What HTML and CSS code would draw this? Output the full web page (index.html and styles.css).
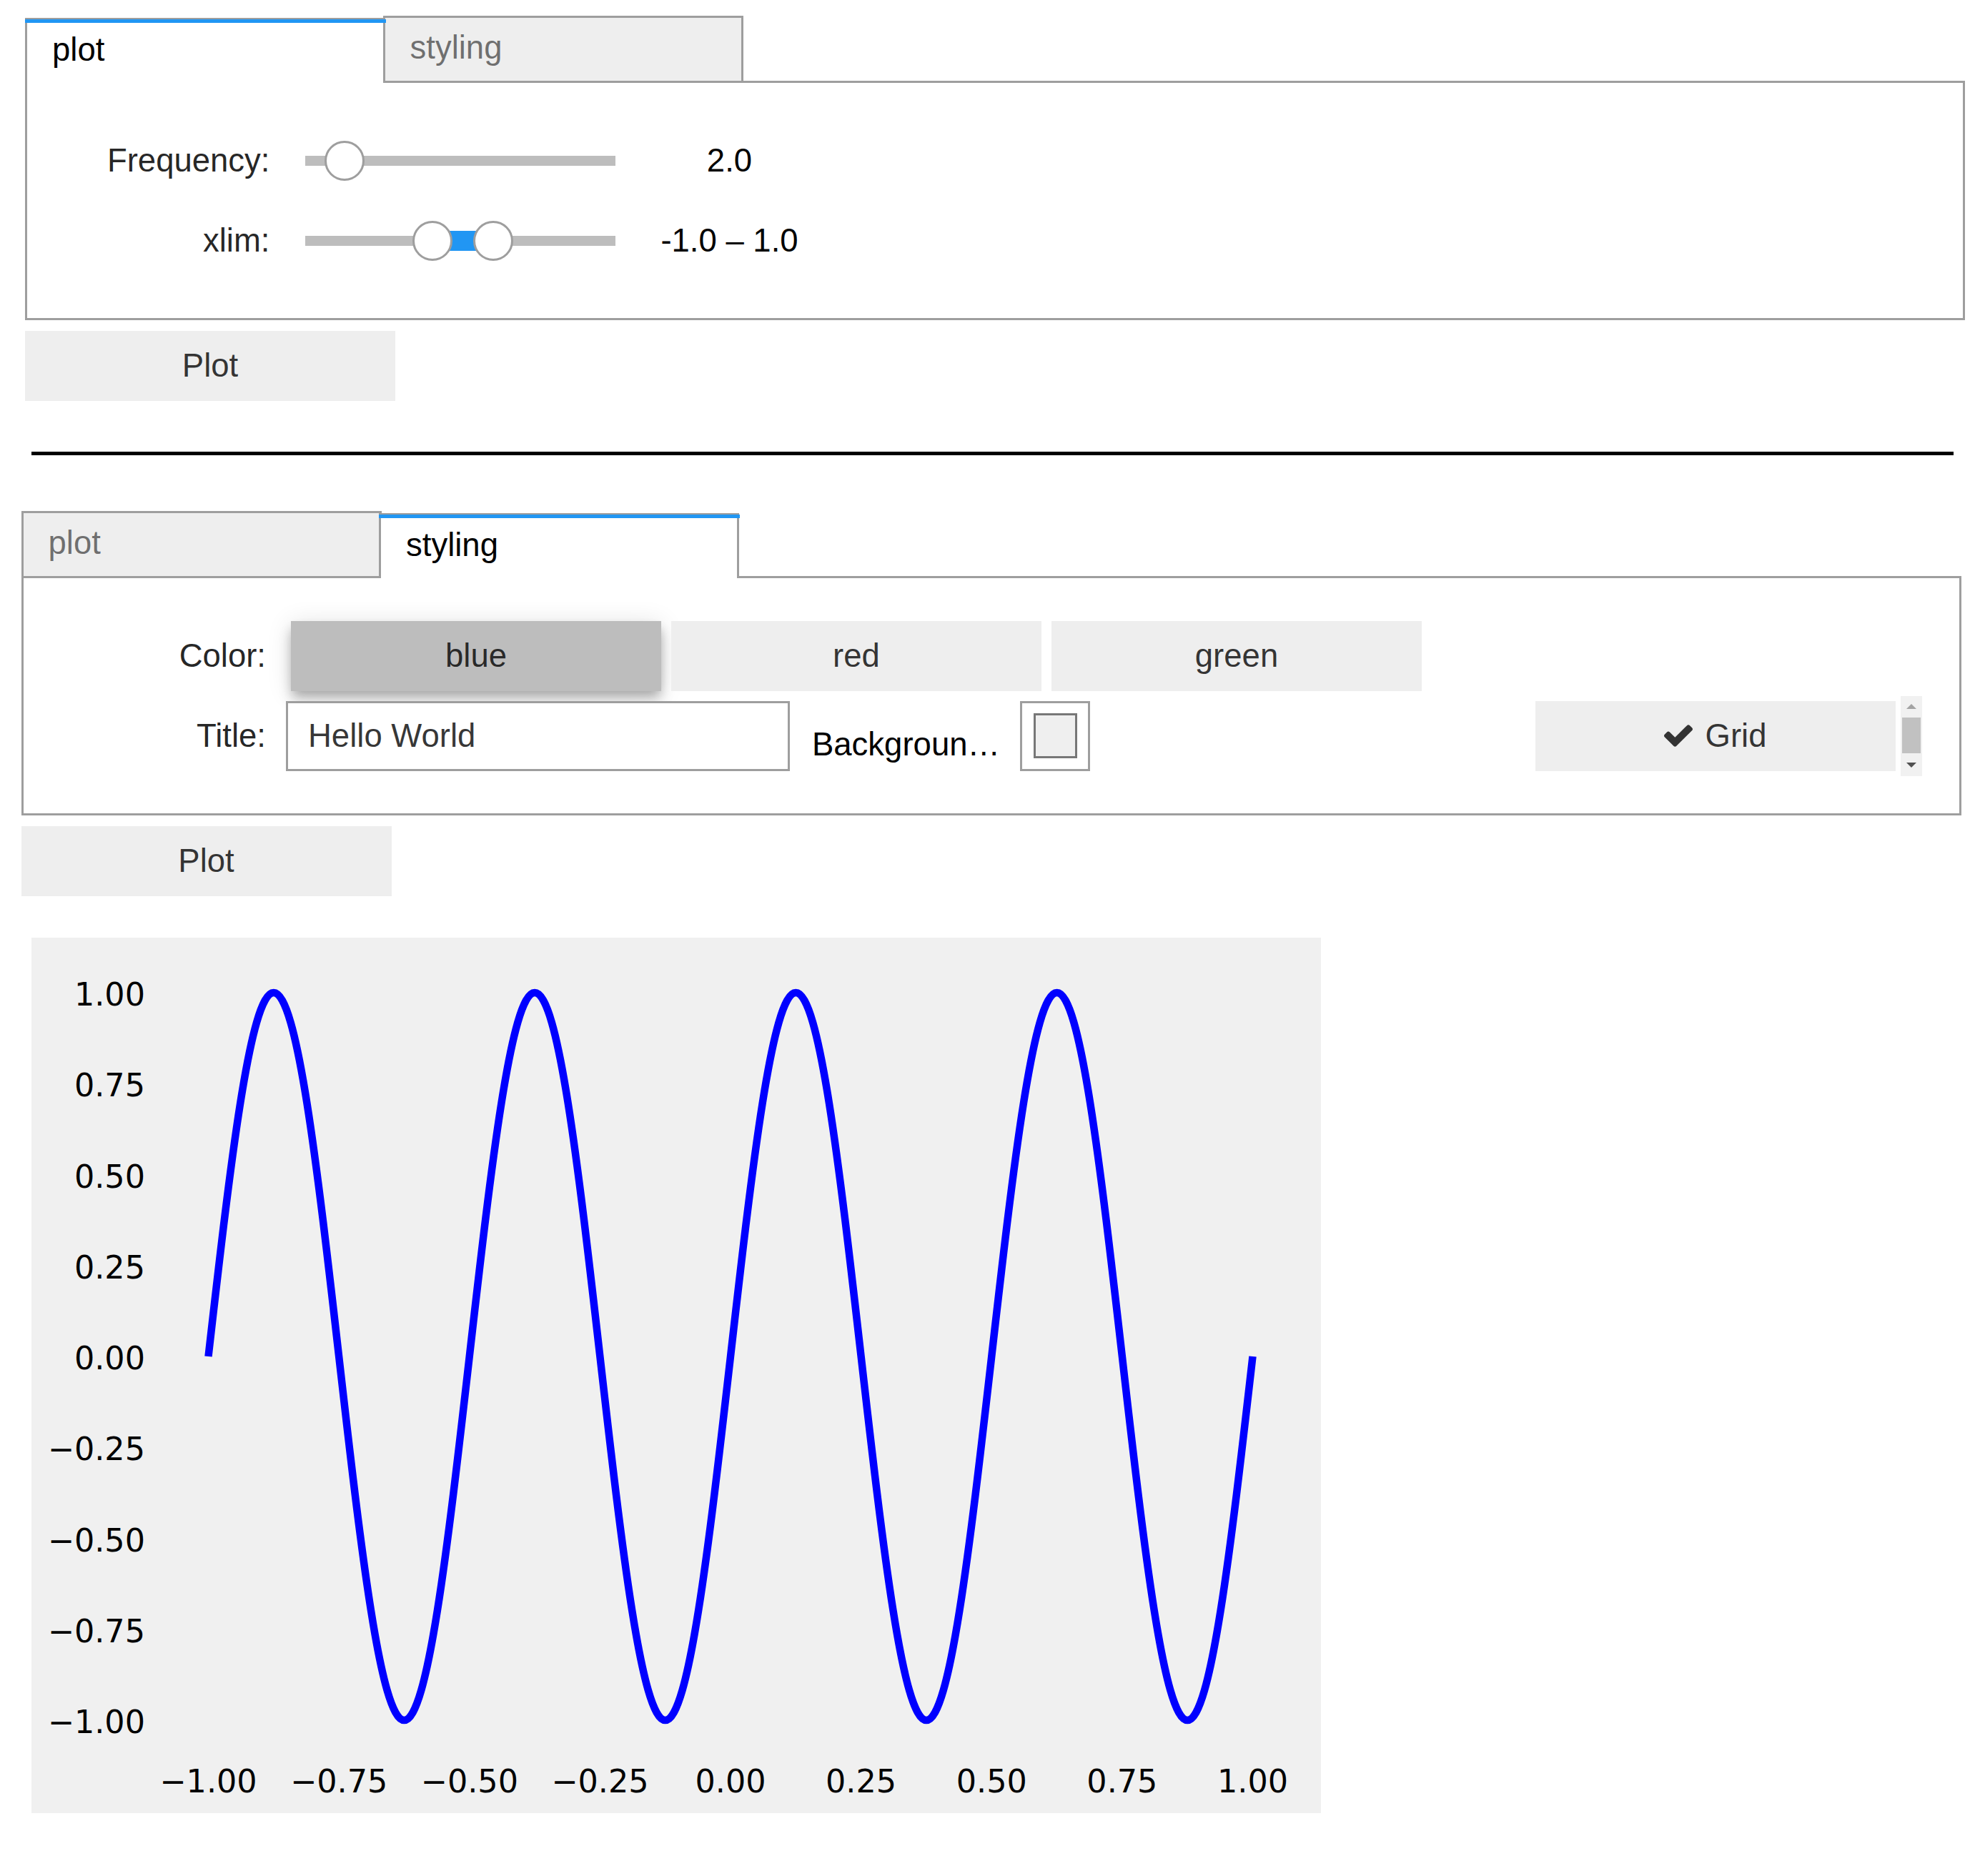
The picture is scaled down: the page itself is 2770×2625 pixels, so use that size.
FILE: index.html
```html
<!DOCTYPE html>
<html>
<head>
<meta charset="utf-8">
<title>Widgets</title>
<link rel="stylesheet" href="styles.css">
</head>
<body>
<div class="page">

  <div class="tab-widget first">
    <div class="tab-bar">
      <div class="tab current">plot</div>
      <div class="tab">styling</div>
    </div>
    <div class="tab-panel">
      <div class="wrow">
        <div class="wlabel">Frequency:</div>
        <div class="slider">
          <div class="track"></div>
          <div class="handle" style="left:27px"></div>
        </div>
        <div class="readout">2.0</div>
      </div>
      <div class="wrow">
        <div class="wlabel">xlim:</div>
        <div class="slider">
          <div class="track"></div>
          <div class="range" style="left:178px;width:85px"></div>
          <div class="handle" style="left:150px"></div>
          <div class="handle" style="left:235px"></div>
        </div>
        <div class="readout">-1.0 – 1.0</div>
      </div>
    </div>
  </div>
  <button class="wbutton first-btn">Plot</button>

  <hr class="divider">

  <div class="tab-widget second">
    <div class="tab-bar">
      <div class="tab">plot</div>
      <div class="tab current">styling</div>
    </div>
    <div class="tab-panel">
      <div class="wrow">
        <div class="wlabel">Color:</div>
        <div class="toggles">
          <button class="toggle selected">blue</button>
          <button class="toggle">red</button>
          <button class="toggle">green</button>
        </div>
      </div>
      <div class="hbox">
        <div class="text-widget">
          <div class="wlabel">Title:</div>
          <input class="text-input" type="text" value="Hello World">
        </div>
        <div class="color-widget">
          <div class="wlabel bg-label">Backgroun…</div>
          <div class="swatch"><div class="swatch-fill"></div></div>
        </div>
        <button class="grid-btn">
          <svg class="check" viewBox="121 334 1550 1188" width="40" height="31" aria-hidden="true"><path d="M1671 566q0 40-28 68l-724 724-136 136q-28 28-68 28t-68-28l-136-136-362-362q-28-28-28-68t28-68l136-136q28-28 68-28t68 28l294 295 656-657q28-28 68-28t68 28l136 136q28 28 28 68z"/></svg>
          <span>Grid</span>
        </button>
        <div class="vscroll">
          <div class="sb-btn"><span class="arrow-up"></span></div>
          <div class="sb-thumb"></div>
          <div class="sb-btn down"><span class="arrow-down"></span></div>
        </div>
      </div>
    </div>
  </div>
  <button class="wbutton second-btn">Plot</button>

  <div class="figure">
    <svg viewBox="0 0 1804 1225" width="1804" height="1225">
      <rect class="fig-bg" x="0" y="0" width="1804" height="1225"/>
      <g class="ytick">
        <text x="159" y="95">1.00</text>
        <text x="159" y="222.3">0.75</text>
        <text x="159" y="349.5">0.50</text>
        <text x="159" y="476.8">0.25</text>
        <text x="159" y="604">0.00</text>
        <text x="159" y="731.3">−0.25</text>
        <text x="159" y="858.5">−0.50</text>
        <text x="159" y="985.8">−0.75</text>
        <text x="159" y="1113">−1.00</text>
      </g>
      <g class="xtick">
        <text x="247.5" y="1195.5">−1.00</text>
        <text x="430.1" y="1195.5">−0.75</text>
        <text x="612.8" y="1195.5">−0.50</text>
        <text x="795.4" y="1195.5">−0.25</text>
        <text x="978" y="1195.5">0.00</text>
        <text x="1160.6" y="1195.5">0.25</text>
        <text x="1343.3" y="1195.5">0.50</text>
        <text x="1525.9" y="1195.5">0.75</text>
        <text x="1708.5" y="1195.5">1.00</text>
      </g>
      <path class="curve" d="M247.5 586
        c30.52,-267.3 58.36,-509 91.3125,-509 c32.95,0 60.79,241.7 91.3125,509 c30.52,267.3 58.36,509 91.3125,509 c32.95,0 60.79,-241.7 91.3125,-509
        c30.52,-267.3 58.36,-509 91.3125,-509 c32.95,0 60.79,241.7 91.3125,509 c30.52,267.3 58.36,509 91.3125,509 c32.95,0 60.79,-241.7 91.3125,-509
        c30.52,-267.3 58.36,-509 91.3125,-509 c32.95,0 60.79,241.7 91.3125,509 c30.52,267.3 58.36,509 91.3125,509 c32.95,0 60.79,-241.7 91.3125,-509
        c30.52,-267.3 58.36,-509 91.3125,-509 c32.95,0 60.79,241.7 91.3125,509 c30.52,267.3 58.36,509 91.3125,509 c32.95,0 60.79,-241.7 91.3125,-509"/>
    </svg>
  </div>

</div>
</body>
</html>
```

FILE: styles.css
```css
html, body {
  margin: 0;
  padding: 0;
  background: #ffffff;
}

body {
  font-family: "Liberation Sans", Arial, Helvetica, sans-serif;
  font-size: 45.5px;
  color: rgba(0, 0, 0, 0.87);
}

.page {
  display: flex;
  flex-direction: column;
  align-items: flex-start;
  width: 2770px;
  padding-bottom: 84px;
}

/* ---------- tab widget ---------- */
.tab-widget {
  display: flex;
  flex-direction: column;
  width: 2714px;
}

.tab-widget.first {
  margin: 22px 0 0 35px;
}

.tab-widget.second {
  margin: 78px 0 0 29.5px;
  width: 2714.5px;
}

.tab-bar {
  display: flex;
  align-items: flex-end;
  height: 91px;
}

.tab {
  box-sizing: border-box;
  position: relative;
  flex: none;
  width: 504px;
  height: 91px;
  padding: 0 35px;
  margin-left: -3.5px;
  border: 3.5px solid #9e9e9e;
  border-bottom: none;
  background: #eeeeee;
  color: rgba(0, 0, 0, 0.54);
  line-height: 84px;
  white-space: nowrap;
}

.tab:first-child {
  margin-left: 0;
}

.tab.current {
  height: 90.5px;
  margin-bottom: -2.5px;
  background: #ffffff;
  color: #000000;
  z-index: 1;
}

.tab.current::before {
  content: "";
  position: absolute;
  top: -1.5px;
  left: -3.5px;
  width: calc(100% + 7px);
  height: 5px;
  background: #2196f3;
}

.tab-panel {
  box-sizing: border-box;
  display: flex;
  flex-direction: column;
  border: 3.5px solid #9e9e9e;
  padding: 52.5px 52.5px 52px;
  background: #ffffff;
}

/* ---------- rows / labels ---------- */
.wrow {
  display: flex;
  align-items: center;
  height: 98px;
  margin: 7px;
}

.wlabel {
  flex: none;
  width: 280px;
  margin-right: 28px;
  text-align: right;
  white-space: nowrap;
  overflow: hidden;
  color: rgba(0, 0, 0, 0.87);
}

/* ---------- sliders ---------- */
.slider {
  position: relative;
  flex: none;
  display: flex;
  align-items: center;
  width: 434px;
  height: 98px;
  margin-left: 21px;
}

.track {
  width: 100%;
  height: 14px;
  background: #bdbdbd;
}

.range {
  position: absolute;
  top: 35px;
  height: 28px;
  background: #2196f3;
}

.handle {
  position: absolute;
  top: 21px;
  box-sizing: border-box;
  width: 56px;
  height: 56px;
  border: 3.5px solid #9e9e9e;
  border-radius: 50%;
  background: #ffffff;
}

.readout {
  flex: none;
  width: 222px;
  margin-left: 49px;
  text-align: center;
  white-space: nowrap;
  color: #000000;
}

/* ---------- buttons ---------- */
.wbutton,
.toggle,
.grid-btn {
  box-sizing: border-box;
  height: 98px;
  padding: 0 21px;
  border: none;
  background: #eeeeee;
  color: rgba(0, 0, 0, 0.8);
  font-family: "Liberation Sans", Arial, Helvetica, sans-serif;
  font-size: 45.5px;
  white-space: nowrap;
}

.wbutton {
  width: 518px;
  margin-top: 15.5px;
}

.first-btn {
  margin-left: 35px;
}

.second-btn {
  margin-left: 29.5px;
}

.divider {
  box-sizing: content-box;
  width: 2689px;
  height: 5px;
  margin: 71px 0 0 44px;
  border: none;
  background: #000000;
}

.toggles {
  display: flex;
}

.toggle {
  width: 518px;
  margin: 0 7px;
}

.toggle.selected {
  background: #bdbdbd;
  box-shadow: 0 14px 17.5px 0 rgba(0, 0, 0, 0.14),
              0 3.5px 35px 0 rgba(0, 0, 0, 0.12),
              0 7px 14px -3.5px rgba(0, 0, 0, 0.2);
}

/* ---------- second row ---------- */
.hbox {
  display: flex;
  align-items: center;
  height: 112px;
}

.text-widget,
.color-widget {
  display: flex;
  align-items: center;
  margin: 7px;
}

.text-input {
  box-sizing: border-box;
  width: 705px;
  height: 98px;
  margin: 0;
  padding: 0 28px;
  border: 3.5px solid #9e9e9e;
  background: #ffffff;
  color: rgba(0, 0, 0, 0.8);
  font-family: "Liberation Sans", Arial, Helvetica, sans-serif;
  font-size: 45.5px;
  outline: none;
}

.bg-label {
  padding-top: 24px;
  color: #000000;
}

.swatch {
  box-sizing: border-box;
  display: flex;
  align-items: center;
  justify-content: center;
  width: 98px;
  height: 98px;
  border: 3.5px solid #9e9e9e;
  background: #ffffff;
}

.swatch-fill {
  box-sizing: border-box;
  width: 61px;
  height: 63px;
  border: 3.5px solid #777777;
  background: #efefef;
}

.grid-btn {
  display: flex;
  align-items: center;
  justify-content: center;
  gap: 18px;
  width: 504px;
  margin-left: auto;
  margin-right: 7px;
}

.check {
  display: block;
  fill: #333333;
}

/* ---------- fake scrollbar ---------- */
.vscroll {
  align-self: stretch;
  display: flex;
  flex-direction: column;
  align-items: center;
  width: 30px;
  background: #f1f1f1;
}

.sb-btn {
  display: flex;
  align-items: center;
  justify-content: center;
  width: 30px;
  height: 30px;
}

.sb-btn.down {
  margin-top: auto;
}

.sb-thumb {
  width: 26px;
  height: 50px;
  background: #c1c1c1;
}

.arrow-up {
  width: 0;
  height: 0;
  border-left: 7px solid transparent;
  border-right: 7px solid transparent;
  border-bottom: 7px solid #a3a3a3;
}

.arrow-down {
  width: 0;
  height: 0;
  border-left: 7px solid transparent;
  border-right: 7px solid transparent;
  border-top: 7px solid #505050;
}

/* ---------- figure ---------- */
.figure {
  margin: 58px 0 0 44px;
  width: 1804px;
  height: 1225px;
}

.figure svg {
  display: block;
}

.fig-bg {
  fill: #f0f0f0;
}

.ytick text,
.xtick text {
  font-family: "DejaVu Sans", sans-serif;
  font-size: 44.5px;
  fill: #000000;
}

.ytick text {
  text-anchor: end;
}

.xtick text {
  text-anchor: middle;
}

.curve {
  fill: none;
  stroke: #0000ff;
  stroke-width: 10.5px;
  stroke-linejoin: round;
}
```
